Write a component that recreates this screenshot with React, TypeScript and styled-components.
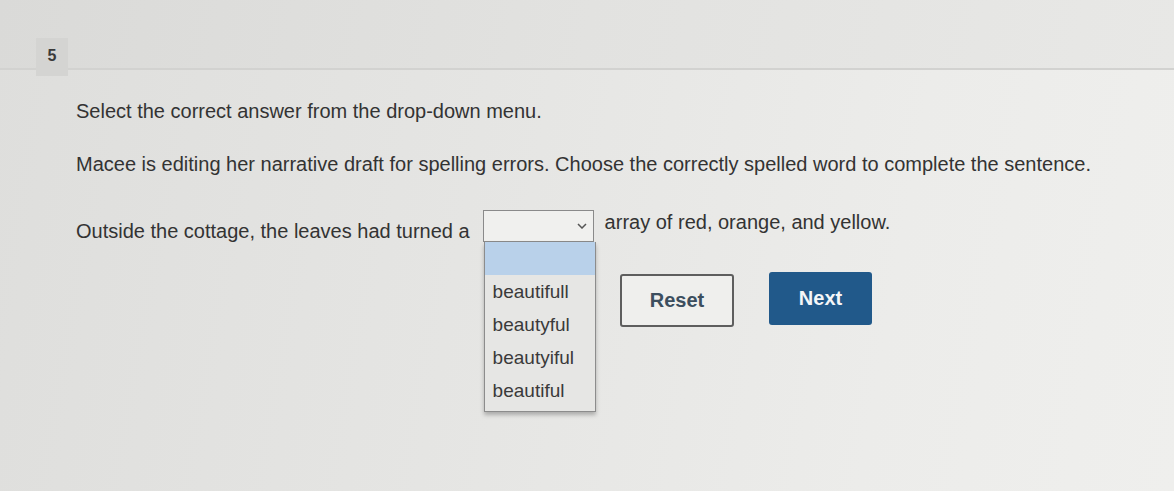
import React, { FC, useState } from 'react';
import styled, { createGlobalStyle } from 'styled-components';

const GlobalStyle = createGlobalStyle`
  html, body {
    margin: 0;
    padding: 0;
  }
  body {
    width: 1174px;
    height: 491px;
    overflow: hidden;
    font-family: 'Liberation Sans', Arial, sans-serif;
    color: #333333;
  }
`;

const options = ['beautifull', 'beautyful', 'beautyiful', 'beautiful'];

const App: FC = () => {
  const [value, setValue] = useState('');

  return (
    <>
      <GlobalStyle />
      <Page>
        <Header>
          <NumberBox>5</NumberBox>
        </Header>

        <Content>
          <Instruction>Select the correct answer from the drop-down menu.</Instruction>
          <Prompt>
            Macee is editing her narrative draft for spelling errors. Choose the correctly spelled word to complete
            the sentence.
          </Prompt>

          <Sentence>
            <span>Outside the cottage, the leaves had turned a</span>
            <SelectWrap>
              <SelectBox>
                <span>{value}</span>
                <Chevron viewBox="0 0 10 6">
                  <path d="M1 1 L5 5 L9 1" />
                </Chevron>
              </SelectBox>
              <OptionList>
                <Option isActive>&nbsp;</Option>
                {options.map(option => (
                  <Option key={option} onClick={() => setValue(option)}>
                    {option}
                  </Option>
                ))}
              </OptionList>
            </SelectWrap>
            <AfterText>array of red, orange, and yellow.</AfterText>
          </Sentence>

          <Actions>
            <ResetButton onClick={() => setValue('')}>Reset</ResetButton>
            <NextButton>Next</NextButton>
          </Actions>
        </Content>
      </Page>
    </>
  );
};

export default App;

const Page = styled.div`
  width: 1174px;
  height: 491px;
  background: linear-gradient(100deg, #dededc 0%, #e5e5e3 40%, #ececea 75%, #efefed 100%);
`;

const Header = styled.div`
  height: 70px;
  padding: 38px 0 0 36px;
  box-sizing: border-box;
  border-bottom: 2px solid #d2d2d0;
  background: linear-gradient(100deg, #dadad8 0%, #e2e2e0 50%, #e8e8e6 100%);
`;

const NumberBox = styled.div`
  width: 32px;
  height: 38px;
  padding-top: 9px;
  box-sizing: border-box;
  background: #d4d4d2;
  font-size: 16px;
  font-weight: bold;
  text-align: center;
  color: #3a3a3a;
`;

const Content = styled.div`
  padding: 30px 0 0 76px;
  font-size: 20px;
`;

const Instruction = styled.p`
  margin: 0;
  line-height: 22px;
`;

const Prompt = styled.p`
  margin: 31px 0 0;
  line-height: 22px;
`;

const Sentence = styled.div`
  margin-top: 35px;
  display: flex;
  align-items: center;
  gap: 13px;
`;

const AfterText = styled.span`
  margin-left: -2px;
  margin-bottom: 18px;
`;

const SelectWrap = styled.div`
  position: relative;
  margin-bottom: 10px;
`;

const SelectBox = styled.div`
  width: 111px;
  height: 32px;
  box-sizing: border-box;
  border: 1px solid #8a8a8a;
  background: #f0f0ee;
  display: flex;
  align-items: center;
  justify-content: space-between;
  padding: 0 6px;
`;

const Chevron = styled.svg`
  width: 10px;
  height: 6px;
  fill: none;
  stroke: #555555;
  stroke-width: 1.5;
`;

const OptionList = styled.ul`
  position: absolute;
  top: 32px;
  left: 1px;
  width: 112px;
  margin: 0;
  padding: 0 0 4px;
  list-style: none;
  box-sizing: border-box;
  background: #e6e6e4;
  border: 1px solid #8c8c8c;
  border-top: none;
  box-shadow: 0 3px 4px rgba(0, 0, 0, 0.25);
  font-size: 19px;
`;

interface OptionProps {
  isActive?: boolean;
}

const Option = styled.li<OptionProps>`
  height: 33px;
  line-height: 33px;
  padding: 0 8px;
  background: ${({ isActive }) => (isActive ? '#b9d1ea' : 'transparent')};
  color: #3a3a3a;
  cursor: pointer;
`;

const Actions = styled.div`
  margin-top: 22px;
  padding-left: 544px;
  display: flex;
  align-items: center;
  gap: 35px;
`;

const ResetButton = styled.button`
  width: 114px;
  height: 53px;
  border: 2px solid #5e5e5e;
  border-radius: 3px;
  background: #efefed;
  color: #3c4e5e;
  font-family: 'Liberation Sans', Arial, sans-serif;
  font-size: 20px;
  font-weight: bold;
  cursor: pointer;
`;

const NextButton = styled.button`
  width: 103px;
  height: 53px;
  margin-top: -4px;
  border: none;
  border-radius: 3px;
  background: #21598a;
  color: #f4f6f8;
  font-family: 'Liberation Sans', Arial, sans-serif;
  font-size: 20px;
  font-weight: bold;
  cursor: pointer;
`;
